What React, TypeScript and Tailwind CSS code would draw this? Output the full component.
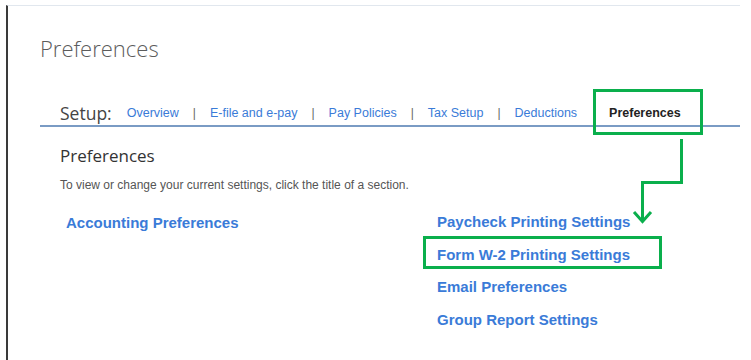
import React from 'react'

const tabs = ["Overview", "E-file and e-pay", "Pay Policies", "Tax Setup", "Deductions"];

const rightLinks = [
    "Paycheck Printing Settings",
    "Form W-2 Printing Settings",
    "Email Preferences",
    "Group Report Settings",
];

export default function App() {
    return (
        <div className="relative w-[751px] h-[360px] overflow-hidden bg-white pl-[6px] pt-[5px] font-['Liberation_Sans',Arial,sans-serif]">
            <div className="h-full w-[734px] border-l-2 border-l-[#3a3a3a] border-t border-t-[#e1e7ee] pl-[32px]">
                <h1 className="pt-[28px] text-[22px] leading-[28px] font-light text-[#5c5c5c] font-['Open_Sans',sans-serif]">
                    Preferences
                </h1>

                {/* setup tabs */}
                <div className="mt-[35px] flex items-center h-[30px] pt-[4px] border-b-2 border-b-[#7a9bc4] pl-[20px]">
                    <span className="text-[17.5px] text-[#444] font-['Open_Sans',sans-serif] mr-[15px]">Setup:</span>
                    {tabs.map((t, i) => (
                        <React.Fragment key={t}>
                            <a className="text-[12.5px] text-[#3a7bd8]">{t}</a>
                            {i < tabs.length - 1 && (
                                <span className="text-[12px] text-[#666] mx-[14px]">|</span>
                            )}
                        </React.Fragment>
                    ))}
                    <span className="ml-[32px] text-[12.5px] font-bold text-[#222]">Preferences</span>
                </div>

                <div className="pl-[20px]">
                    <h2 className="mt-[17px] text-[17px] leading-[24px] text-[#333] font-['Open_Sans',sans-serif]">
                        Preferences
                    </h2>
                    <p className="mt-[8px] text-[12px] text-[#555]">
                        To view or change your current settings, click the title of a section.
                    </p>

                    <div className="mt-[12px] flex">
                        <div className="w-[377px] pl-[6px]">
                            <a className="text-[15px] font-bold leading-[33px] text-[#3a7bd8]">Accounting Preferences</a>
                        </div>
                        <div className="flex flex-col">
                            {rightLinks.map((l) => (
                                <a key={l} className="text-[15px] font-bold leading-[32.7px] text-[#3a7bd8]">{l}</a>
                            ))}
                        </div>
                    </div>
                </div>
            </div>

            {/* green annotation */}
            <svg className="absolute left-0 top-0 pointer-events-none" width="751" height="360" fill="none" stroke="#0aaf4c" strokeWidth="3">
                <rect x="594.5" y="90.5" width="107" height="43" />
                <rect x="424.5" y="237.5" width="236" height="30" />
                <path d="M681.5 139 V182.5 H642.5 V221" />
                <path d="M634 212 L642.5 221.5 L651 212" />
            </svg>
        </div>
    )
}
